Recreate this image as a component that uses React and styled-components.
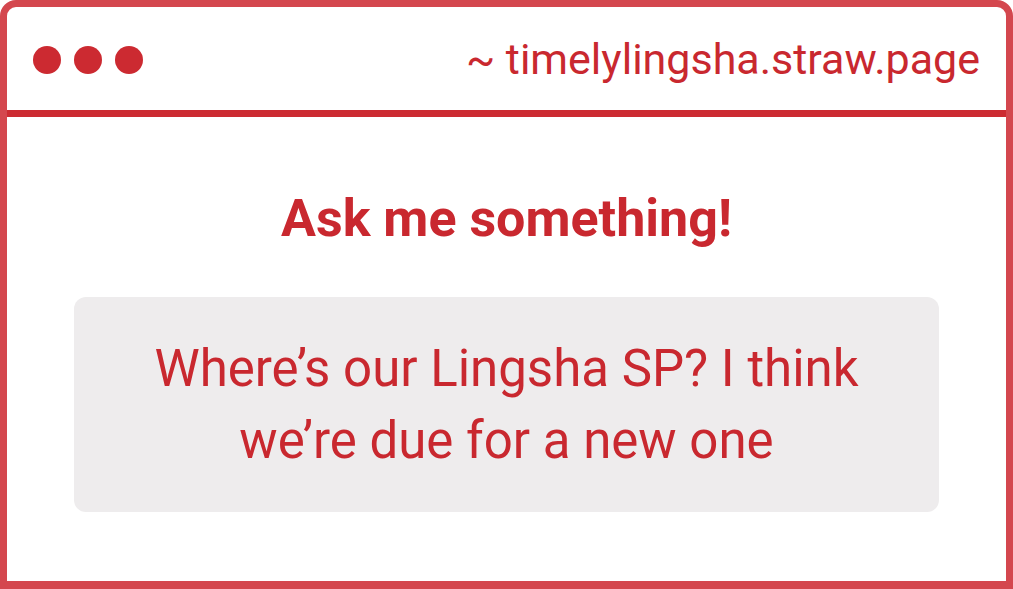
import React from 'react'
import styled, { createGlobalStyle } from 'styled-components'

const GlobalStyle = createGlobalStyle`
  body {
    margin: 0;
    background: #ffffff;
    font-family: Roboto, "Liberation Sans", sans-serif;
  }
`

const Frame = styled.div`
  box-sizing: border-box;
  width: 1013px;
  border: 7px solid #d4474e;
  border-bottom-width: 8px;
  border-radius: 16px 16px 0 0;
  overflow: hidden;
  background: #ffffff;
`

const Header = styled.div`
  height: 103px;
  display: flex;
  align-items: center;
  justify-content: space-between;
  padding: 0 26px;
  border-bottom: 7px solid #cc2b32;
`

const Dots = styled.div`
  display: flex;
  gap: 13px;
  margin-top: 2px;
`

const Dot = styled.span`
  width: 28px;
  height: 28px;
  border-radius: 50%;
  background: #cc2a31;
`

const Url = styled.div`
  font-size: 43px;
  color: #c9282f;
`

const Body = styled.div`
  height: 464px;
  display: flex;
  flex-direction: column;
  align-items: center;
  padding-top: 72px;
  box-sizing: border-box;
`

const Title = styled.h1`
  margin: 0;
  font-size: 52px;
  font-weight: 700;
  color: #c9282f;
  line-height: 60px;
`

const Question = styled.div`
  margin-top: 48px;
  width: 865px;
  height: 215px;
  box-sizing: border-box;
  border-radius: 12px;
  background: #eeeced;
  display: flex;
  align-items: center;
  justify-content: center;
  text-align: center;
  padding: 0 60px;
  font-size: 51px;
  line-height: 72px;
  color: #c9282f;
`

export default function App() {
  return <>
    <GlobalStyle />
    <Frame>
      <Header>
        <Dots>
          <Dot />
          <Dot />
          <Dot />
        </Dots>
        <Url>~ timelylingsha.straw.page</Url>
      </Header>
      <Body>
        <Title>Ask me something!</Title>
        <Question>Where’s our Lingsha SP? I think we’re due for a new one</Question>
      </Body>
    </Frame>
  </>
}
